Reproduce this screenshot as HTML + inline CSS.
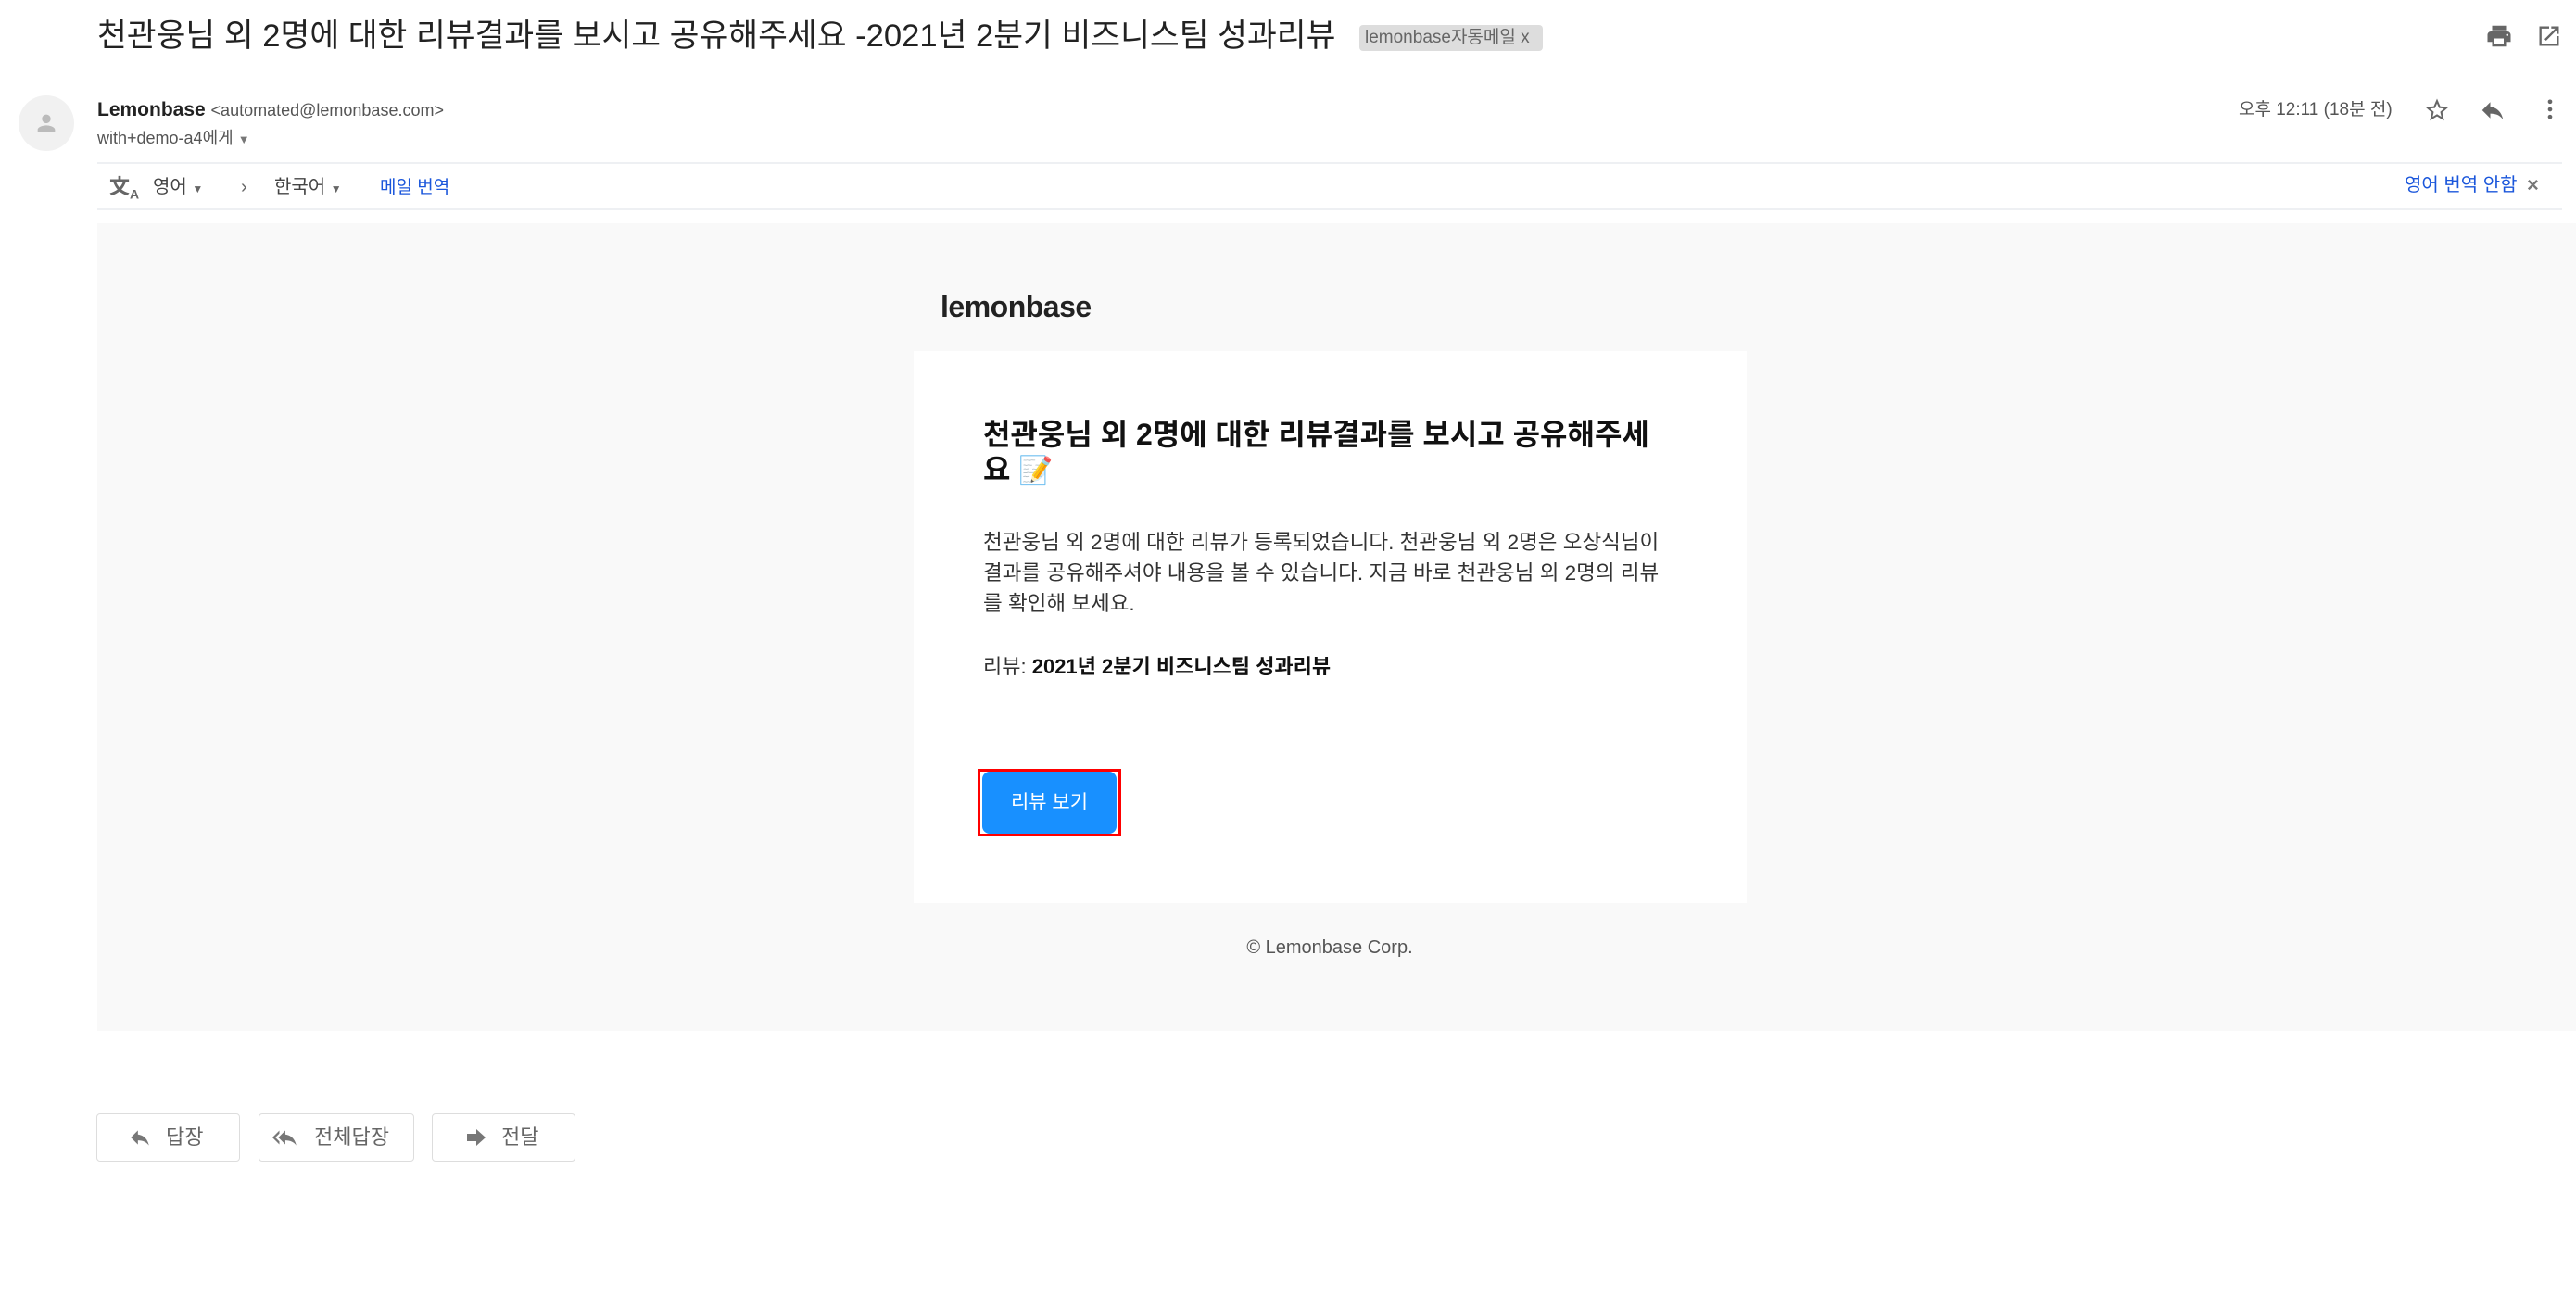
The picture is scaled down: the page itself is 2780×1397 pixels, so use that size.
<!DOCTYPE html>
<html><head><meta charset="utf-8"><style>
*{margin:0;padding:0;box-sizing:border-box}
body{width:2780px;height:1397px;background:#fff;font-family:"Liberation Sans","Noto Sans CJK KR",sans-serif;position:relative;overflow:hidden;color:#222}
.a{position:absolute;white-space:nowrap}
.ic{position:absolute}
</style></head><body>
<div class="a" style="left:105px;top:17px;font-size:34.6px;color:#222;line-height:44px">천관웅님 외 2명에 대한 리뷰결과를 보시고 공유해주세요 -2021년 2분기 비즈니스팀 성과리뷰</div>
<div class="a" style="left:1467px;top:27px;height:28px;width:198px;background:#ddd;border-radius:4px;font-size:19px;color:#666;line-height:28px;padding-left:6px">lemonbase자동메일 x</div>

<svg class="ic" style="left:2682px;top:24px" width="30" height="30" viewBox="0 0 24 24"><path fill="#666" d="M19 8H5c-1.66 0-3 1.34-3 3v6h4v4h12v-4h4v-6c0-1.660-1.34-3-3-3zm-3 11H8v-5h8v5zm3-7c-.55 0-1-.45-1-1s.45-1 1-1 1 .45 1 1-.45 1-1 1zm-1-9H6v4h12V3z"/></svg>
<svg class="ic" style="left:2737px;top:25px" width="28" height="28" viewBox="0 0 24 24"><path fill="#666" d="M19 19H5V5h7V3H3v18h18v-9h-2v7zM14 3v2h3.59l-9.830 9.83 1.41 1.41L19 6.41V10h2V3h-7z"/></svg>

<div class="ic" style="left:20px;top:103px;width:60px;height:60px;border-radius:50%;background:#f1f1f1"></div>
<svg class="ic" style="left:36px;top:119px" width="28" height="28" viewBox="0 0 24 24"><path fill="#bbb" d="M12 12c2.2 0 4-1.8 4-4s-1.8-4-4-4-4 1.8-4 4 1.8 4 4 4zm0 2c-2.7 0-8 1.3-8 4v2h16v-2c0-2.7-5.3-4-8-4z"/></svg>

<div class="a" style="left:105px;top:105px;font-size:21px;line-height:28px"><b style="color:#222">Lemonbase</b> <span style="color:#555;font-size:18px">&lt;automated@lemonbase.com&gt;</span></div>
<div class="a" style="left:105px;top:135px;font-size:18px;line-height:28px;color:#555">with+demo-a4에게 <span style="font-size:13px;color:#777">▼</span></div>

<div class="a" style="left:2416px;top:105px;font-size:19px;line-height:28px;color:#555">오후 12:11 (18분 전)</div>
<svg class="ic" style="left:2615px;top:104px" width="30" height="30" viewBox="0 0 24 24"><path fill="#666" d="M22 9.24l-7.19-.62L12 2 9.19 8.63 2 9.24l5.46 4.73L5.82 21 12 17.27 18.18 21l-1.63-7.03L22 9.24zM12 15.4l-3.76 2.27 1-4.28-3.32-2.88 4.38-.38L12 6.1l1.71 4.04 4.38.38-3.32 2.88 1 4.28L12 15.4z"/></svg>
<svg class="ic" style="left:2675px;top:104px" width="30" height="30" viewBox="0 0 24 24"><path fill="#666" d="M10 9V5l-7 7 7 7v-4.1c5 0 8.5 1.6 11 5.1-1-5-4-10-11-11z"/></svg>
<svg class="ic" style="left:2738px;top:104px" width="28" height="28" viewBox="0 0 24 24"><circle cx="12" cy="5" r="2" fill="#666"/><circle cx="12" cy="12" r="2" fill="#666"/><circle cx="12" cy="19" r="2" fill="#666"/></svg>

<div class="ic" style="left:105px;top:175px;width:2660px;height:2px;background:#eef0f3"></div>
<div class="ic" style="left:105px;top:225px;width:2660px;height:2px;background:#eef0f3"></div>
<div class="a" style="left:118px;top:186px;font-size:22px;color:#666;line-height:32px;font-weight:bold">文<sub style="font-size:14px">A</sub></div>
<div class="a" style="left:165px;top:186px;font-size:20px;line-height:32px;color:#444">영어 <span style="font-size:12px;color:#666">▼</span></div>
<div class="a" style="left:260px;top:186px;font-size:20px;line-height:32px;color:#666">›</div>
<div class="a" style="left:296px;top:186px;font-size:20px;line-height:32px;color:#444">한국어 <span style="font-size:12px;color:#666">▼</span></div>
<div class="a" style="left:410px;top:187px;font-size:19px;line-height:32px;color:#1a56db">메일 번역</div>
<div class="a" style="left:2595px;top:184px;font-size:20px;line-height:32px;color:#1a56db">영어 번역 안함</div>
<div class="a" style="left:2727px;top:184px;font-size:22px;line-height:32px;color:#777;font-weight:bold">×</div>

<div class="ic" style="left:105px;top:241px;width:2675px;height:872px;background:#f9f9f9"></div>
<div class="a" style="left:1015px;top:310px;font-size:32px;line-height:42px;font-weight:bold;color:#222;letter-spacing:-0.5px">lemonbase</div>
<div class="ic" style="left:986px;top:379px;width:899px;height:596px;background:#fff"></div>
<div class="ic" style="left:1061px;top:450px;width:740px;font-size:32px;font-weight:bold;line-height:38px;color:#111">천관웅님 외 2명에 대한 리뷰결과를 보시고 공유해주세요 <span style="font-size:30px">📝</span></div>
<div class="a" style="left:1061px;top:569px;font-size:22.5px;line-height:33px;color:#333">천관웅님 외 2명에 대한 리뷰가 등록되었습니다. 천관웅님 외 2명은 오상식님이<br>결과를 공유해주셔야 내용을 볼 수 있습니다. 지금 바로 천관웅님 외 2명의 리뷰<br>를 확인해 보세요.</div>
<div class="a" style="left:1061px;top:703px;font-size:22px;line-height:33px;color:#333">리뷰: <b style="color:#111">2021년 2분기 비즈니스팀 성과리뷰</b></div>
<div class="ic" style="left:1055px;top:830px;width:155px;height:73px;border:3px solid #f00"></div>
<div class="ic" style="left:1060px;top:833px;width:145px;height:67px;background:#1890ff;border-radius:8px;color:#fff;font-size:21px;line-height:67px;text-align:center">리뷰 보기</div>
<div class="a" style="left:1335px;top:1009px;width:200px;text-align:center;font-size:20px;line-height:28px;color:#555">© Lemonbase Corp.</div>

<div class="ic" style="left:104px;top:1202px;width:155px;height:52px;border:1px solid #ddd;border-radius:4px"></div>
<div class="ic" style="left:279px;top:1202px;width:168px;height:52px;border:1px solid #ddd;border-radius:4px"></div>
<div class="ic" style="left:466px;top:1202px;width:155px;height:52px;border:1px solid #ddd;border-radius:4px"></div>
<svg class="ic" style="left:138px;top:1215px" width="26" height="26" viewBox="0 0 24 24"><path fill="#777" d="M10 9V5l-7 7 7 7v-4.1c5 0 8.5 1.6 11 5.1-1-5-4-10-11-11z"/></svg>
<div class="a" style="left:179px;top:1212px;font-size:22px;line-height:32px;color:#666">답장</div>
<svg class="ic" style="left:294px;top:1215px" width="30" height="26" viewBox="0 0 28 24"><path fill="#777" d="M7 8V5l-7 7 7 7v-3l-4-4 4-4zm6 1V5l-7 7 7 7v-4.1c5 0 8.5 1.6 11 5.1-1-5-4-10-11-11z"/></svg>
<div class="a" style="left:339px;top:1212px;font-size:22px;line-height:32px;color:#666">전체답장</div>
<svg class="ic" style="left:502px;top:1215px" width="24" height="26" viewBox="0 0 24 24"><path fill="#777" d="M2 8h10V3l10 9-10 9v-5H2z"/></svg>
<div class="a" style="left:541px;top:1212px;font-size:22px;line-height:32px;color:#666">전달</div>
</body></html>
